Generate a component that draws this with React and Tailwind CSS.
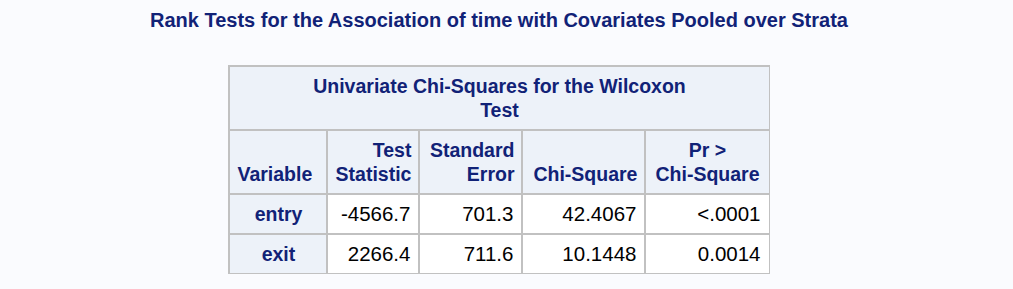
import React from "react";

const th = "border-l-2 border-t-2 border-[#c1c1c1] bg-[#edf2f9] text-[#112277] font-bold text-[19.5px] px-[7px] py-[7px] align-bottom leading-6 whitespace-nowrap";
const td = "border-l-2 border-t-2 border-[#c1c1c1] bg-white text-black text-[20.5px] px-[8px] py-[7px] text-right leading-6 whitespace-nowrap";
const rh = "border-l-2 border-t-2 border-[#c1c1c1] bg-[#edf2f9] text-[#112277] font-bold text-[19.5px] px-[7px] py-[7px] text-center leading-6 whitespace-nowrap";

export default function App() {
  return (
    <div className="w-[1013px] h-[289px] bg-[#fafbfe] overflow-hidden" style={{ fontFamily: '"Liberation Sans", Arial, sans-serif' }}>
      <div className="w-[998px] flex flex-col items-center">
        <div className="mt-[8px] text-[20px] leading-6 font-bold text-[#112277]">
          Rank Tests for the Association of time with Covariates Pooled over Strata
        </div>
        <table className="mt-[33px] border-separate border-spacing-0 border-r border-b border-[#c1c1c1] table-fixed w-[540px]">
          <colgroup>
            <col className="w-[98px]" />
            <col className="w-[92px]" />
            <col className="w-[103px]" />
            <col className="w-[123px]" />
            <col className="w-[124px]" />
          </colgroup>
          <thead>
            <tr>
              <th colSpan={5} className={th + " text-center"}>
                Univariate Chi-Squares for the Wilcoxon
                <br />
                Test
              </th>
            </tr>
            <tr>
              <th className={th + " text-left"}>Variable</th>
              <th className={th + " text-right"}>Test<br />Statistic</th>
              <th className={th + " text-right"}>Standard<br />Error</th>
              <th className={th + " text-right"}>Chi-Square</th>
              <th className={th + " text-center"}>Pr &gt;<br />Chi-Square</th>
            </tr>
          </thead>
          <tbody>
            <tr>
              <th className={rh}>entry</th>
              <td className={td}>-4566.7</td>
              <td className={td}>701.3</td>
              <td className={td}>42.4067</td>
              <td className={td}>&lt;.0001</td>
            </tr>
            <tr>
              <th className={rh}>exit</th>
              <td className={td}>2266.4</td>
              <td className={td}>711.6</td>
              <td className={td}>10.1448</td>
              <td className={td}>0.0014</td>
            </tr>
          </tbody>
        </table>
      </div>
    </div>
  );
}
